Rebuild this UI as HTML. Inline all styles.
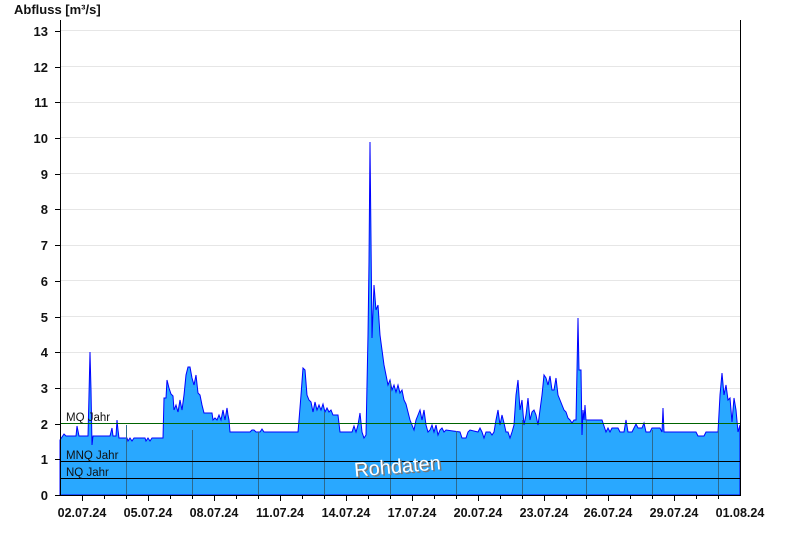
<!DOCTYPE html>
<html><head><meta charset="utf-8"><style>
html,body{margin:0;padding:0;background:#fff;width:800px;height:550px;overflow:hidden}
svg{display:block;font-family:"Liberation Sans",Arial,sans-serif}
</style></head><body>
<svg width="800" height="550" viewBox="0 0 800 550" xmlns="http://www.w3.org/2000/svg">
<text x="14" y="14" font-size="13" font-weight="bold" fill="#111">Abfluss [m³/s]</text>
<g stroke="#e6e6e6" stroke-width="1">
<line x1="60" y1="30.5" x2="740" y2="30.5"/><line x1="60" y1="66.5" x2="740" y2="66.5"/><line x1="60" y1="102.5" x2="740" y2="102.5"/><line x1="60" y1="137.5" x2="740" y2="137.5"/><line x1="60" y1="173.5" x2="740" y2="173.5"/><line x1="60" y1="209.5" x2="740" y2="209.5"/><line x1="60" y1="245.5" x2="740" y2="245.5"/><line x1="60" y1="280.5" x2="740" y2="280.5"/><line x1="60" y1="316.5" x2="740" y2="316.5"/><line x1="60" y1="352.5" x2="740" y2="352.5"/><line x1="60" y1="388.5" x2="740" y2="388.5"/><line x1="60" y1="423.5" x2="740" y2="423.5"/><line x1="60" y1="459.5" x2="740" y2="459.5"/>
</g>
<polygon fill="#29a8ff" stroke="#0000ff" stroke-width="1" stroke-linejoin="miter" points="60,495 60,440 62,437 64,434 66,436 76,436 77,426 79,436 88,436 89,395 90,352 91,390 92,445 93,436 110,436 112,428 113,436 116,436 117,420 118,430 119,438 127,438 128,441 130,438 132,441 134,438 145,438 146,441 148,438 150,441 152,438 163,438 164,398 166,398 167,380 169,388 171,394 173,396 174,410 176,405 178,412 180,400 182,410 184,395 186,375 188,367 190,367 192,378 194,385 196,375 198,393 200,395 202,405 204,413 212,413 213,420 215,418 217,420 219,415 221,420 223,410 225,420 227,408 228,415 229,420 230,432 250,432 252,430 254,430 256,432 260,432 262,429 264,432 298,432 299,420 301,395 303,368 305,370 307,395 309,400 311,402 313,412 315,402 317,410 319,405 321,410 323,404 325,412 327,408 329,412 331,410 333,415 338,415 340,432 352,432 354,426 356,432 358,425 360,413 362,432 364,438 366,435 368,335 369,262 370,142 371,240 372,338 374,285 376,310 378,305 380,335 382,350 384,365 386,375 388,385 390,380 392,390 394,385 396,392 398,385 400,393 402,390 404,400 406,404 408,412 410,420 412,425 414,430 416,420 418,415 420,410 422,420 424,410 426,425 428,432 430,430 432,425 434,432 436,425 438,435 440,430 442,428 444,432 446,430 460,432 462,438 466,438 468,432 470,430 478,432 480,428 482,432 484,438 486,432 490,432 492,435 494,432 496,420 498,410 500,425 502,415 504,423 506,432 508,432 510,438 512,432 514,425 516,395 518,380 520,410 522,400 524,425 526,415 528,398 530,420 532,412 534,410 536,415 538,425 540,410 542,395 544,375 546,378 548,385 550,376 552,390 554,390 556,378 558,395 560,400 562,405 564,410 566,412 568,418 570,420 572,423 574,420 576,420 577,370 578,318 579,370 581,370 582,435 583,410 584,420 585,405 586,420 588,420 602,420 604,426 606,432 608,428 610,432 612,428 618,428 620,432 624,432 626,420 628,432 632,432 634,428 636,424 638,428 642,428 644,423 646,432 650,432 652,428 660,428 662,432 663,408 664,432 696,432 698,436 704,436 706,432 718,432 720,395 722,373 724,395 726,385 728,400 730,398 732,422 734,398 736,410 738,432 740,425 740,495"/>
<g stroke="#2d6a8f" stroke-width="1">
<line x1="126.5" y1="425" x2="126.5" y2="495"/><line x1="192.5" y1="430" x2="192.5" y2="495"/><line x1="258.5" y1="432" x2="258.5" y2="495"/><line x1="324.5" y1="412" x2="324.5" y2="495"/><line x1="390.5" y1="382" x2="390.5" y2="495"/><line x1="456.5" y1="431" x2="456.5" y2="495"/><line x1="522.5" y1="420" x2="522.5" y2="495"/><line x1="586.5" y1="420" x2="586.5" y2="495"/><line x1="652.5" y1="430" x2="652.5" y2="495"/><line x1="718.5" y1="430" x2="718.5" y2="495"/>
</g>
<line x1="60" y1="423.5" x2="740" y2="423.5" stroke="#006400" stroke-width="1"/>
<line x1="60" y1="461.5" x2="740" y2="461.5" stroke="#000" stroke-width="1"/>
<line x1="60" y1="478.5" x2="740" y2="478.5" stroke="#000" stroke-width="1"/>
<g font-size="11.5" fill="#111">
<text x="66" y="421">MQ Jahr</text><text x="66" y="459">MNQ Jahr</text><text x="66" y="476">NQ Jahr</text>
</g>
<g transform="translate(398,473) rotate(-5)" font-size="20" text-anchor="middle">
<text x="1.5" y="1.5" fill="#777">Rohdaten</text>
<text x="0" y="0" fill="#fff">Rohdaten</text>
</g>
<g stroke="#000" stroke-width="1">
<line x1="60.5" y1="20" x2="60.5" y2="495"/><line x1="740.5" y1="20" x2="740.5" y2="495"/><line x1="60" y1="495.5" x2="741" y2="495.5"/>
<line x1="55" y1="31.5" x2="60" y2="31.5"/><line x1="55" y1="67.5" x2="60" y2="67.5"/><line x1="55" y1="102.5" x2="60" y2="102.5"/><line x1="55" y1="138.5" x2="60" y2="138.5"/><line x1="55" y1="174.5" x2="60" y2="174.5"/><line x1="55" y1="209.5" x2="60" y2="209.5"/><line x1="55" y1="245.5" x2="60" y2="245.5"/><line x1="55" y1="281.5" x2="60" y2="281.5"/><line x1="55" y1="317.5" x2="60" y2="317.5"/><line x1="55" y1="352.5" x2="60" y2="352.5"/><line x1="55" y1="388.5" x2="60" y2="388.5"/><line x1="55" y1="424.5" x2="60" y2="424.5"/><line x1="55" y1="459.5" x2="60" y2="459.5"/><line x1="55" y1="495.5" x2="60" y2="495.5"/>
</g>
<g stroke="#000" stroke-width="1">
<line x1="82.5" y1="495" x2="82.5" y2="501"/><line x1="104.5" y1="495" x2="104.5" y2="499"/><line x1="126.5" y1="495" x2="126.5" y2="499"/><line x1="148.5" y1="495" x2="148.5" y2="501"/><line x1="170.5" y1="495" x2="170.5" y2="499"/><line x1="192.5" y1="495" x2="192.5" y2="499"/><line x1="214.5" y1="495" x2="214.5" y2="501"/><line x1="236.5" y1="495" x2="236.5" y2="499"/><line x1="258.5" y1="495" x2="258.5" y2="499"/><line x1="280.5" y1="495" x2="280.5" y2="501"/><line x1="302.5" y1="495" x2="302.5" y2="499"/><line x1="324.5" y1="495" x2="324.5" y2="499"/><line x1="346.5" y1="495" x2="346.5" y2="501"/><line x1="368.5" y1="495" x2="368.5" y2="499"/><line x1="390.5" y1="495" x2="390.5" y2="499"/><line x1="412.5" y1="495" x2="412.5" y2="501"/><line x1="434.5" y1="495" x2="434.5" y2="499"/><line x1="456.5" y1="495" x2="456.5" y2="499"/><line x1="478.5" y1="495" x2="478.5" y2="501"/><line x1="500.5" y1="495" x2="500.5" y2="499"/><line x1="522.5" y1="495" x2="522.5" y2="499"/><line x1="544.5" y1="495" x2="544.5" y2="501"/><line x1="566.5" y1="495" x2="566.5" y2="499"/><line x1="586.5" y1="495" x2="586.5" y2="499"/><line x1="608.5" y1="495" x2="608.5" y2="501"/><line x1="630.5" y1="495" x2="630.5" y2="499"/><line x1="652.5" y1="495" x2="652.5" y2="499"/><line x1="674.5" y1="495" x2="674.5" y2="501"/><line x1="696.5" y1="495" x2="696.5" y2="499"/><line x1="718.5" y1="495" x2="718.5" y2="499"/>
</g>
<g font-size="13" font-weight="bold" fill="#111" text-anchor="end">
<text x="48" y="36">13</text><text x="48" y="72">12</text><text x="48" y="107">11</text><text x="48" y="143">10</text><text x="48" y="179">9</text><text x="48" y="214">8</text><text x="48" y="250">7</text><text x="48" y="286">6</text><text x="48" y="322">5</text><text x="48" y="357">4</text><text x="48" y="393">3</text><text x="48" y="429">2</text><text x="48" y="464">1</text><text x="48" y="500">0</text>
</g>
<g font-size="12.5" font-weight="bold" fill="#111" text-anchor="middle">
<text x="82" y="517">02.07.24</text><text x="148" y="517">05.07.24</text><text x="214" y="517">08.07.24</text><text x="280" y="517">11.07.24</text><text x="346" y="517">14.07.24</text><text x="412" y="517">17.07.24</text><text x="478" y="517">20.07.24</text><text x="544" y="517">23.07.24</text><text x="608" y="517">26.07.24</text><text x="674" y="517">29.07.24</text><text x="740" y="517">01.08.24</text>
</g>
</svg>
</body></html>
